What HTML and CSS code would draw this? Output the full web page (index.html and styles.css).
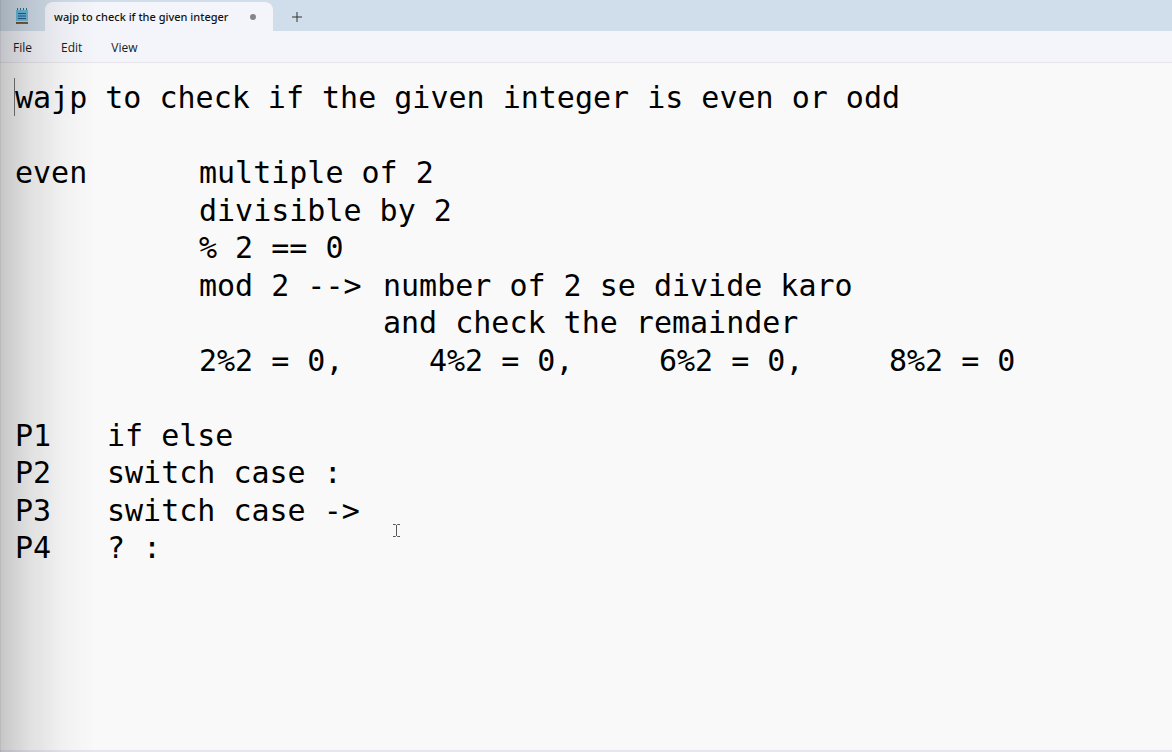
FILE: index.html
```html
<!DOCTYPE html>
<html lang="en">
<head>
<meta charset="utf-8">
<title>wajp to check if the given integer</title>
<link rel="stylesheet" href="styles.css">
</head>
<body>
<div class="window">
  <header class="titlebar">
    <svg class="app-icon" viewBox="0 0 12 16" aria-hidden="true">
      <path fill="#79522f" d="M0 13h12v3H0z"/>
      <path fill="#e3d39a" d="M0 13h12v1H0z"/>
      <path fill="#6dbbe0" d="M0 2h12v11H0z"/>
      <path fill="#a04c3c" d="M1 15h11v1H1z"/>
      <path stroke="#1d5f87" stroke-width="1" d="M2 5.500h8M2 8h8M2 10.500h8"/>
      <path stroke="#2b7573" stroke-width="1" d="M1.500 0v2M4.500 0v2M7.500 0v2M10.500 0v2"/>
    </svg>
    <div class="tab">
      <span class="tab-title">wajp to check if the given integer</span>
      <span class="unsaved"></span>
    </div>
    <button class="new-tab" type="button" aria-label="New tab">
      <svg viewBox="0 0 10 10" width="10" height="10" aria-hidden="true"><path d="M5 0v10M0 5h10" stroke="#333" stroke-width="1"/></svg>
    </button>
  </header>
  <nav class="menubar">
    <button type="button">File</button>
    <button type="button">Edit</button>
    <button type="button">View</button>
  </nav>
  <main class="document">
    <textarea class="editor" aria-label="Text editor" spellcheck="false">
wajp to check if the given integer is even or odd

even			multiple of 2
				divisible by 2
				% 2 == 0
				mod 2 -->	number of 2 se divide karo
								and check the remainder
				2%2 = 0,		4%2 = 0,		6%2 = 0,		8%2 = 0

P1		if else
P2		switch case :
P3		switch case -&gt;
P4		? :</textarea>
    <span class="caret"></span>
    <svg class="pointer" viewBox="0 0 7 13" aria-hidden="true"><path d="M0 .5h2.500l1 1 1-1H7M0 12.500h2.500l1-1 1 1H7M3.500 1v11" fill="none" stroke="#555"/></svg>
  </main>
  <div class="shade"></div>
</div>
</body>
</html>
```
FILE: styles.css
```css
* { box-sizing: border-box; }

body {
  margin: 0;
  background: #f9f9f9;
  color: #1b1b1b;
  font-family: "Open Sans", "Noto Sans", sans-serif;
  font-size: 12px;
}

button {
  border: 0;
  padding: 0;
  background: none;
  color: inherit;
  font: inherit;
}

.window {
  position: relative;
  display: flex;
  flex-direction: column;
  min-height: 100vh;
}

.titlebar {
  display: flex;
  align-items: stretch;
  height: 31px;
  background: #d0ddea;
}

.app-icon {
  width: 12px;
  height: 16px;
  margin: 8px 17px 0 16px;
}

.tab {
  position: relative;
  display: flex;
  align-items: center;
  justify-content: space-between;
  width: 228px;
  margin-top: 2px;
  padding: 0 17px 0 9px;
  border-radius: 8px 8px 0 0;
  background: #f3f5fb;
  white-space: nowrap;
}

.tab-title {
  font-family: "Noto Sans", sans-serif;
  font-size: 11px;
  font-weight: 500;
  color: #111;
}

.unsaved {
  width: 6px;
  height: 6px;
  border-radius: 50%;
  background: #858589;
}

.new-tab {
  display: flex;
  align-items: center;
  justify-content: center;
  width: 48px;
  padding-top: 2px;
}

.menubar {
  display: flex;
  align-items: center;
  gap: 29px;
  height: 32px;
  padding: 2px 13px 0;
  border-bottom: 1px solid #e7e4ea;
  background: #f3f5fb;
}

.document {
  position: relative;
  display: flex;
  flex: 1;
  border-bottom: 2px solid #e6e6ee;
}

.editor {
  flex: 1;
  padding: 16px 15px;
  border: 0;
  outline: 0;
  resize: none;
  overflow: hidden;
  background: #f9f9f9;
  color: #000;
  font-family: "DejaVu Sans Mono", monospace;
  font-size: 30px;
  line-height: 1.25;
  tab-size: 46px;
}

.caret {
  position: absolute;
  top: 15px;
  left: 14px;
  width: 1px;
  height: 38px;
  background: #777;
}

.pointer {
  position: absolute;
  top: 461px;
  left: 393px;
  width: 7px;
  height: 13px;
}

.shade {
  position: absolute;
  inset: 0 auto 0 0;
  width: 96px;
  border-left: 1px solid rgba(0, 0, 0, 0.25);
  background: linear-gradient(to right, rgba(0, 0, 0, 0.2), rgba(0, 0, 0, 0.1) 30%, rgba(0, 0, 0, 0.03) 65%, transparent);
  pointer-events: none;
}
```
